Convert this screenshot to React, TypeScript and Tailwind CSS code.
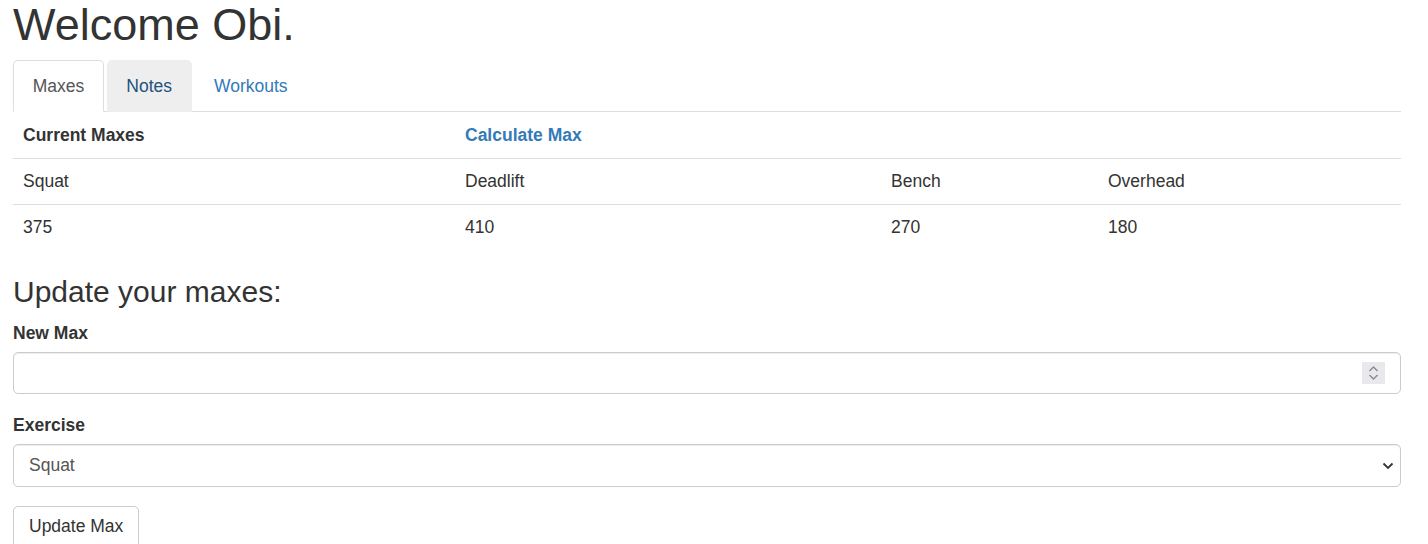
import { useState } from "react";

const tabs = ["Maxes", "Notes", "Workouts"];

const lifts = [
  { name: "Squat", max: 375 },
  { name: "Deadlift", max: 410 },
  { name: "Bench", max: 270 },
  { name: "Overhead", max: 180 },
];

export default function App() {
  const [active, setActive] = useState("Maxes");
  const [exercise, setExercise] = useState("Squat");

  return (
    <div className="min-h-screen bg-white pl-[13px] pr-[27px] font-['Liberation_Sans',Arial,sans-serif] text-[17.5px] leading-[25px] text-[#333]">
      <h1 className="mb-[10.5px] text-[45px] leading-[49.5px]">Welcome Obi.</h1>

      <ul className="flex w-[867px] border-b border-[#ddd]">
        {tabs.map((tab) => {
          const isActive = tab === active;
          const hovered = tab === "Notes";
          return (
            <li key={tab} className="-mb-px mr-[2.5px]">
              <button
                type="button"
                onClick={() => setActive(tab)}
                className={[
                  "block rounded-t-[5px] border px-[18.75px] py-[12.5px] leading-[25px]",
                  isActive
                    ? "border-[#ddd] border-b-transparent bg-white text-[#555]"
                    : hovered
                      ? "border-[#eee] bg-[#eee] text-[#23527c]"
                      : "border-transparent text-[#337ab7]",
                ].join(" ")}
              >
                {tab}
              </button>
            </li>
          );
        })}
      </ul>

      <table className="-mt-px mb-[25px] w-full table-fixed border-collapse">
        <tbody>
          <tr className="border-t border-[#ddd]">
            <th className="w-[442px] px-[10px] py-[10.5px] text-left font-bold">Current Maxes</th>
            <th className="w-[426px] px-[10px] py-[10.5px] text-left font-bold text-[#337ab7]">Calculate Max</th>
            <th className="w-[217px] px-[10px] py-[10.5px]"></th>
            <th className="px-[10px] py-[10.5px]"></th>
          </tr>
          <tr className="border-t border-[#ddd]">
            {lifts.map((l) => (
              <td key={l.name} className="p-[10px]">
                {l.name}
              </td>
            ))}
          </tr>
          <tr className="border-t border-[#ddd]">
            {lifts.map((l) => (
              <td key={l.name} className="p-[10px]">
                {l.max}
              </td>
            ))}
          </tr>
        </tbody>
      </table>

      <h3 className="mb-[12.5px] text-[30px] leading-[33px]">Update your maxes:</h3>

      <div className="mb-[18.75px]">
        <label className="mb-[6.25px] inline-block font-bold">New Max</label>
        <div className="relative">
          <input
            type="text"
            className="block h-[42.5px] w-full rounded-[5px] border border-[#ccc] px-[15px] text-[17.5px] text-[#555] shadow-[inset_0_1px_1px_rgba(0,0,0,0.075)] outline-none"
          />
          <div className="absolute right-[16px] top-[10px] flex h-[22px] w-[23px] flex-col items-center justify-center bg-[#e9e9ed]">
            <svg width="11" height="16" viewBox="0 0 11 16" fill="none" stroke="#8a8a8a" strokeWidth="1.4">
              <path d="M1.5 6 L5.5 2 L9.5 6" />
              <path d="M1.5 10 L5.5 14 L9.5 10" />
            </svg>
          </div>
        </div>
      </div>

      <div className="mb-[18.75px]">
        <label className="mb-[6.25px] inline-block font-bold">Exercise</label>
        <div className="relative">
          <select
            value={exercise}
            onChange={(e) => setExercise(e.target.value)}
            className="block h-[42.5px] w-full appearance-none rounded-[5px] border border-[#ccc] bg-white px-[15px] text-[17.5px] text-[#555] shadow-[inset_0_1px_1px_rgba(0,0,0,0.075)] outline-none"
          >
            {lifts.map((l) => (
              <option key={l.name}>{l.name}</option>
            ))}
          </select>
          <svg
            className="pointer-events-none absolute right-[7px] top-[18px]"
            width="12"
            height="8"
            viewBox="0 0 12 8"
            fill="none"
            stroke="#333"
            strokeWidth="1.8"
          >
            <path d="M1.5 1.5 L6 6 L10.5 1.5" />
          </svg>
        </div>
      </div>

      <button
        type="button"
        className="rounded-[5px] border border-[#ccc] bg-white px-[15px] py-[7.5px] leading-[25px] text-[#333]"
      >
        Update Max
      </button>
    </div>
  );
}
